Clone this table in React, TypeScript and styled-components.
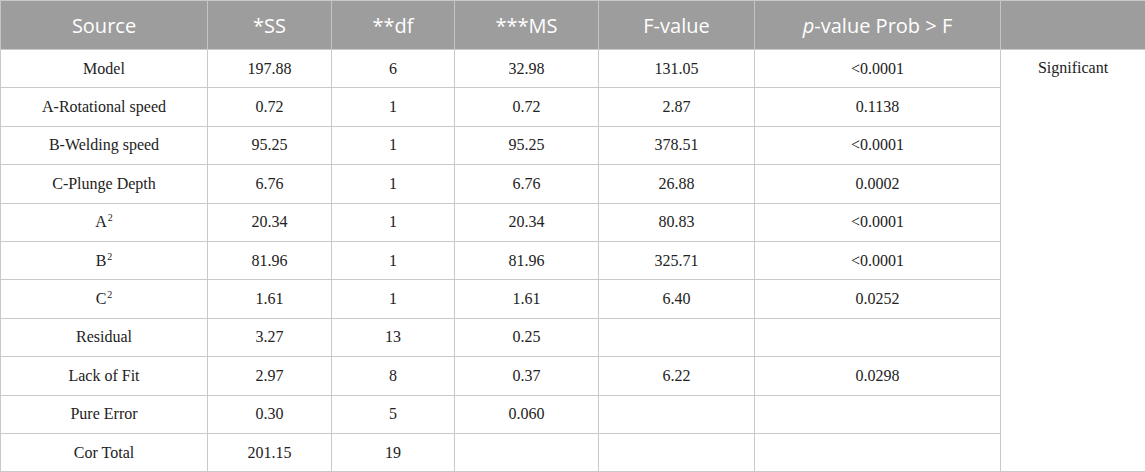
import React from "react";
import styled, { createGlobalStyle } from "styled-components";

const Global = createGlobalStyle`
  html, body { margin: 0; padding: 0; background: #ffffff; }
  #root { width: 1145px; }
`;

const Table = styled.table`
  width: 1145px;
  border-collapse: collapse;
  table-layout: fixed;
  border: 1px solid #c9c9c9;
`;

const HeadCell = styled.th`
  height: 48px;
  padding: 0;
  background: #9d9d9d;
  color: #ffffff;
  font-family: "Open Sans", "Noto Sans", sans-serif;
  font-size: 20px;
  font-weight: 400;
  text-align: center;
  vertical-align: middle;
  border-left: 1px solid #c4c4c4;
  border-right: 1px solid #c4c4c4;
  border-bottom: 1px solid #c9c9c9;
`;

const Row = styled.tr`
  height: 38.4px;
`;

const Cell = styled.td<{ $top?: boolean }>`
  padding: 0;
  font-family: "Liberation Serif", "Times New Roman", serif;
  font-size: 16px;
  color: #222222;
  text-align: center;
  vertical-align: ${(p) => (p.$top ? "top" : "middle")};
  padding-top: ${(p) => (p.$top ? "9px" : "0")};
  border: 1px solid #c9c9c9;
`;

const Sup = styled.sup`
  font-size: 10px;
  vertical-align: 6px;
  line-height: 0;
  margin-left: 1px;
`;

const Italic = styled.i`
  font-style: italic;
`;

type RowData = [React.ReactNode, string, string, string, string, string];

const rows: RowData[] = [
  ["Model", "197.88", "6", "32.98", "131.05", "<0.0001"],
  ["A-Rotational speed", "0.72", "1", "0.72", "2.87", "0.1138"],
  ["B-Welding speed", "95.25", "1", "95.25", "378.51", "<0.0001"],
  ["C-Plunge Depth", "6.76", "1", "6.76", "26.88", "0.0002"],
  [<>A<Sup>2</Sup></>, "20.34", "1", "20.34", "80.83", "<0.0001"],
  [<>B<Sup>2</Sup></>, "81.96", "1", "81.96", "325.71", "<0.0001"],
  [<>C<Sup>2</Sup></>, "1.61", "1", "1.61", "6.40", "0.0252"],
  ["Residual", "3.27", "13", "0.25", "", ""],
  ["Lack of Fit", "2.97", "8", "0.37", "6.22", "0.0298"],
  ["Pure Error", "0.30", "5", "0.060", "", ""],
  ["Cor Total", "201.15", "19", "", "", ""],
];

const widths = [207, 124, 123, 144, 156, 246, 145];

export default function App() {
  return (
    <>
      <Global />
      <Table>
        <colgroup>
          {widths.map((w, i) => (
            <col key={i} style={{ width: w }} />
          ))}
        </colgroup>
        <thead>
          <tr>
            <HeadCell>Source</HeadCell>
            <HeadCell>*SS</HeadCell>
            <HeadCell>**df</HeadCell>
            <HeadCell>***MS</HeadCell>
            <HeadCell>F-value</HeadCell>
            <HeadCell>
              <Italic>p</Italic>-value Prob &gt; F
            </HeadCell>
            <HeadCell></HeadCell>
          </tr>
        </thead>
        <tbody>
          {rows.map((r, i) => (
            <Row key={i}>
              {r.map((c, j) => (
                <Cell key={j}>{c}</Cell>
              ))}
              {i === 0 && (
                <Cell $top rowSpan={rows.length}>
                  Significant
                </Cell>
              )}
            </Row>
          ))}
        </tbody>
      </Table>
    </>
  );
}
